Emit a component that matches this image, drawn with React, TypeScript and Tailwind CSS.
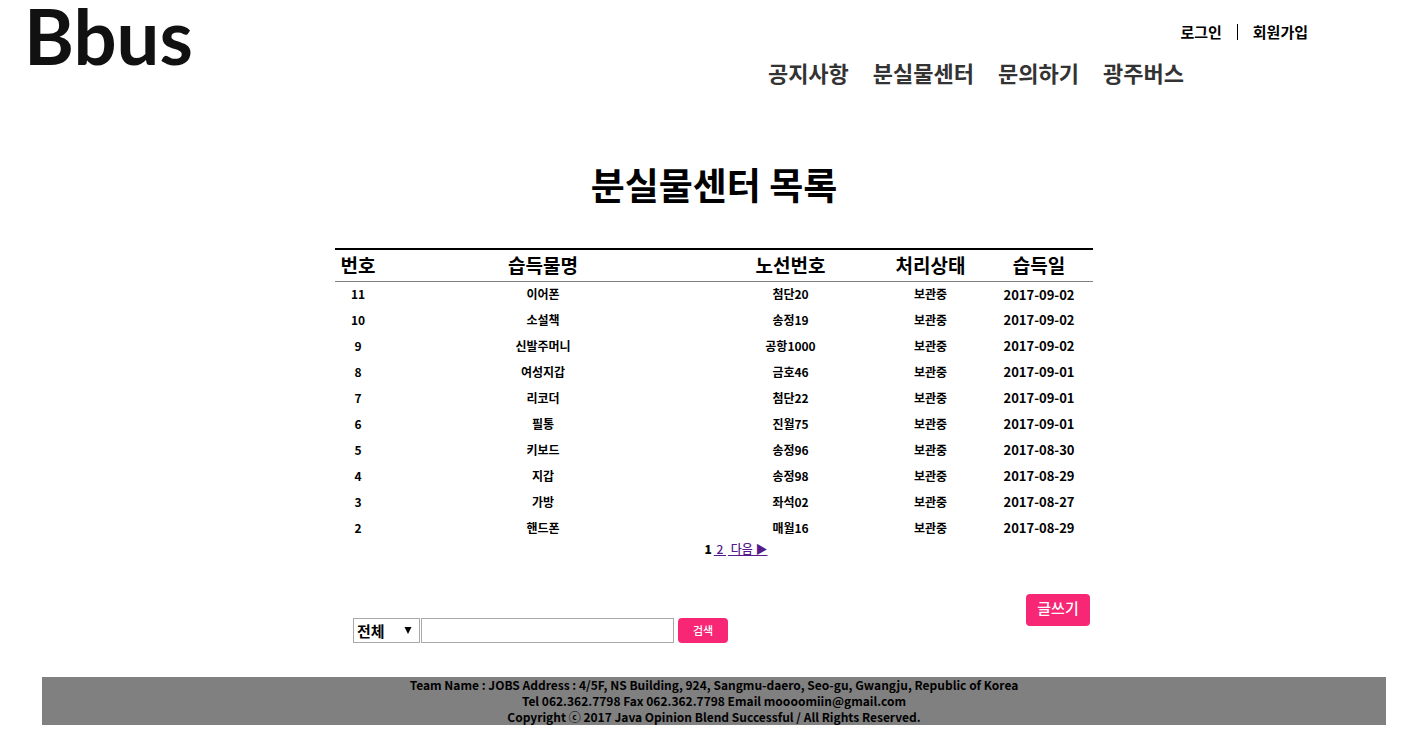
import React from 'react';

interface LostItem {
  no: number;
  name: string;
  route: string;
  status: string;
  date: string;
}

const MENU = ['공지사항', '분실물센터', '문의하기', '광주버스'];

const ITEMS: LostItem[] = [
  { no: 11, name: '이어폰', route: '첨단20', status: '보관중', date: '2017-09-02' },
  { no: 10, name: '소설책', route: '송정19', status: '보관중', date: '2017-09-02' },
  { no: 9, name: '신발주머니', route: '공항1000', status: '보관중', date: '2017-09-02' },
  { no: 8, name: '여성지갑', route: '금호46', status: '보관중', date: '2017-09-01' },
  { no: 7, name: '리코더', route: '첨단22', status: '보관중', date: '2017-09-01' },
  { no: 6, name: '필통', route: '진월75', status: '보관중', date: '2017-09-01' },
  { no: 5, name: '키보드', route: '송정96', status: '보관중', date: '2017-08-30' },
  { no: 4, name: '지갑', route: '송정98', status: '보관중', date: '2017-08-29' },
  { no: 3, name: '가방', route: '좌석02', status: '보관중', date: '2017-08-27' },
  { no: 2, name: '핸드폰', route: '매월16', status: '보관중', date: '2017-08-29' },
];

const Header: React.FC = () => (
  <header className="flex justify-between items-start pl-6 pr-[117px]">
    <a href="#" className="font-['Lato',sans-serif] font-bold text-[76px] leading-[72px] text-[#111]">
      Bbus
    </a>

    <div className="flex flex-col items-end pt-5">
      <div className="flex items-center h-6 text-[15px]">
        <a href="#login">로그인</a>
        <span className="w-px h-4 mx-[15px] bg-black" />
        <a href="#join">회원가입</a>
      </div>
      <nav className="flex items-center gap-6 h-9 mt-[10px] mr-[124px] text-[22px] text-[#333]">
        {MENU.map((label) => (
          <a key={label} href="#">{label}</a>
        ))}
      </nav>
    </div>
  </header>
);

const ItemTable: React.FC = () => (
  <table className="w-full table-fixed border-t-2 border-black text-center text-xs">
    <colgroup>
      <col className="w-[46px]" />
      <col />
      <col className="w-[171px]" />
      <col className="w-[109px]" />
      <col className="w-[108px]" />
    </colgroup>
    <thead>
      <tr className="h-8 border-b border-[#808080] text-[19px] leading-6 whitespace-nowrap">
        <th>번호</th>
        <th>습득물명</th>
        <th>노선번호</th>
        <th>처리상태</th>
        <th>습득일</th>
      </tr>
    </thead>
    <tbody>
      {ITEMS.map((item) => (
        <tr key={item.no} className="h-[26px]">
          <td>{item.no}</td>
          <td>{item.name}</td>
          <td>{item.route}</td>
          <td>{item.status}</td>
          <td className="text-[13px]">{item.date}</td>
        </tr>
      ))}
    </tbody>
  </table>
);

const Pagination: React.FC = () => (
  <div className="flex justify-center gap-[2px] pl-11 text-xs leading-4 whitespace-pre">
    <strong>1</strong>
    <a href="#page2" className="font-medium text-[#551a8b] underline"> 2 </a>
    <a href="#next" className="font-medium text-[#551a8b] underline"> 다음 ▶</a>
  </div>
);

const SearchForm: React.FC = () => (
  <form className="flex items-center ml-[18px]" onSubmit={(e) => e.preventDefault()}>
    <div className="relative mr-px">
      <select
        aria-label="검색 조건"
        className="block appearance-none w-[67px] h-[25px] pl-[3px] border border-[#a9a9a9] bg-white text-[15px] leading-5 font-bold"
      >
        <option>전체</option>
        <option>습득물명</option>
        <option>노선번호</option>
      </select>
      <svg viewBox="0 0 8 7" className="absolute right-2 top-[9px] w-2 h-[7px] pointer-events-none">
        <path d="M0.5 0h7L4 7z" fill="#000" />
      </svg>
    </div>
    <input type="text" aria-label="검색어" className="w-[253px] h-[25px] px-1 border border-[#a9a9a9]" />
    <button type="submit" className="w-[50px] h-[25px] ml-1 pb-0.5 rounded bg-[#f72775] text-white text-[11px] leading-4 font-medium">
      검색
    </button>
  </form>
);

const App: React.FC = () => (
  <div className="min-h-screen bg-white text-black font-bold font-['Noto_Sans_CJK_KR',sans-serif]">
    <Header />

    <div className="pl-[42px] pr-[39px]">
      <main className="w-full max-w-[758px] mx-auto pt-[67px]">
        <h1 className="mb-[37px] text-center text-[37px] leading-[54px]">분실물센터 목록</h1>
        <ItemTable />
        <Pagination />
        <div className="flex justify-end mt-[37px] pr-[3px]">
          <button className="w-16 h-8 pb-1 rounded bg-[#f72775] text-white text-[15px] leading-5 font-medium">글쓰기</button>
        </div>
        <div className="-mt-2">
          <SearchForm />
        </div>
      </main>

      <footer className="mt-[34px] bg-[#808080] text-center text-xs leading-4">
        <p>Team Name : JOBS Address : 4/5F, NS Building, 924, Sangmu-daero, Seo-gu, Gwangju, Republic of Korea</p>
        <p>Tel 062.362.7798 Fax 062.362.7798 Email moooomiin@gmail.com</p>
        <p>Copyright ⓒ 2017 Java Opinion Blend Successful / All Rights Reserved.</p>
      </footer>
    </div>
  </div>
);

export default App;
